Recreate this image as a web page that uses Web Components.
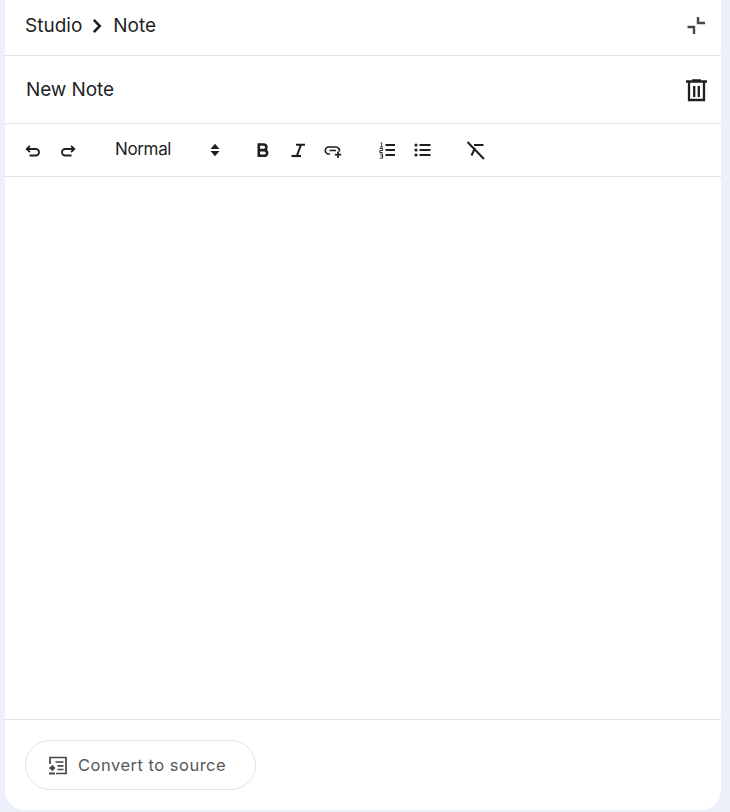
<!DOCTYPE html>
<html lang="en">
<head>
<meta charset="utf-8">
<title>Note</title>
<style>
  html, body { margin: 0; height: 100%; background: #edf0fb; }
  body { font-family: Inter, "Liberation Sans", sans-serif; color: #1f1f1f; overflow: hidden; }
</style>
</head>
<body>

<note-panel>
  <note-header slot="header">
    <span slot="root">Studio</span>
    <span slot="leaf">Note</span>
  </note-header>
  <note-title slot="title">New Note</note-title>
  <note-toolbar slot="toolbar"></note-toolbar>
  <convert-button slot="footer">Convert to source</convert-button>
</note-panel>

<script>
/* panel: white card with rows for header, title, toolbar, editor, footer */
class NotePanel extends HTMLElement {
  constructor() {
    super();
    this.attachShadow({ mode: 'open' }).innerHTML = `
      <style>
        :host { display: flex; flex-direction: column; width: 716px; height: 810px; margin-left: 5px;
                background: #fff; border-radius: 0 0 20px 20px; overflow: hidden; }
        .editor { flex: 1; }
        footer { box-sizing: border-box; height: 91px; border-top: 1px solid #e1e3e8; padding: 20px 0 0 20px; }
      </style>
      <slot name="header"></slot>
      <slot name="title"></slot>
      <slot name="toolbar"></slot>
      <div class="editor"></div>
      <footer><slot name="footer"></slot></footer>
    `;
  }
}

class NoteHeader extends HTMLElement {
  constructor() {
    super();
    this.attachShadow({ mode: 'open' }).innerHTML = `
      <style>
        :host { display: flex; align-items: center; height: 51px; padding: 0 15px 4px 20px;
                border-bottom: 1px solid #e1e3e8; font-size: 19px; color: #1f1f1f; }
        .crumbs { display: flex; align-items: center; flex: 1; }
        svg { display: block; }
        .chev { margin: 0 6px 0 5px; }
      </style>
      <div class="crumbs">
        <slot name="root"></slot>
        <svg class="chev" width="20" height="20" viewBox="0 0 20 20"><path d="M6.800 3.800 12.800 10l-6 6.200" fill="none" stroke="#1f1f1f" stroke-width="2.600"/></svg>
        <slot name="leaf"></slot>
      </div>
      <svg width="20" height="20" viewBox="0 0 20 20"><path d="M12 1v6h7M1.500 11h6.500v7" fill="none" stroke="#444746" stroke-width="2.400"/></svg>
    `;
  }
}

class NoteTitle extends HTMLElement {
  constructor() {
    super();
    this.attachShadow({ mode: 'open' }).innerHTML = `
      <style>
        :host { display: flex; align-items: center; height: 67px; border-bottom: 1px solid #e1e3e8;
                padding: 0 13px 0 21px; font-size: 19px; letter-spacing: -0.1px; color: #1f1f1f; }
        .text { flex: 1; }
        svg { display: block; }
      </style>
      <div class="text"><slot></slot></div>
      <svg width="24" height="24" viewBox="0 0 24 24" fill="none" stroke="#1f1f1f" stroke-width="2.300">
        <path d="M2 3.500h21M8 2.500h9M5 3.500V22h15V3.500M10.200 8v11M14.800 8v11"/>
      </svg>
    `;
  }
}

/* one icon slot of the toolbar */
class ToolIcon extends HTMLElement {
  constructor() {
    super();
    this.attachShadow({ mode: 'open' }).innerHTML = `
      <style>
        :host { display: flex; width: 20px; height: 20px; flex: none; }
        svg { width: 20px; height: 20px; display: block; }
      </style>
      <svg viewBox="0 0 20 20" fill="none" stroke="#1f1f1f" stroke-width="1.800">${ToolIcon.paths[this.getAttribute('name')]}</svg>
    `;
  }
}
ToolIcon.paths = {
  undo: '<path d="M6.500 15.500h6.300a3.200 3.200 0 0 0 0-6.500H3.800"/><path d="M6.900 5.800 3.700 9l3.200 3.200"/>',
  redo: '<path d="M13.500 15.500H7.200a3.200 3.200 0 0 1 0-6.500h9"/><path d="M13.100 5.800 16.300 9l-3.200 3.200"/>',
  sort: '<path d="M10 3.800 14.500 9h-9zM10 16.200 5.500 11h9z" fill="#1f1f1f" stroke="none"/>',
  bold: '<path d="M5.800 4.500h4.800a2.800 2.800 0 0 1 0 5.600H5.800zM5.800 10.100h5.500a2.800 2.800 0 0 1 0 5.700H5.800z" stroke-width="2.600"/>',
  italic: '<path d="M8 4.700h9M13 4.700 9 15.500" stroke-width="2"/><path d="M3.500 16h9.500" stroke-width="2.200"/>',
  link: '<path d="M7 14H5.800a3.500 3.500 0 0 1 0-7H13a3.500 3.500 0 0 1 3.300 4.500M6.500 10.500h6.500M15 11.500v6.500M11.800 14.700h6.400" stroke-width="1.700"/>',
  ol: '<path d="M7.500 5h9.500M7.500 10h9.500M7.500 15h9.500" stroke-width="1.800"/><path d="M2.500 2.800h1.200v4M2 7h2.800M1.800 8.500h2.800v2h-2.800v2h3M1.800 14h2.800v4.200h-2.800M2.500 16h2" stroke-width=".9"/>',
  ul: '<path d="M5.500 5h11M5.500 10h11M5.500 15h11" stroke-width="1.800"/><circle cx="2" cy="5" r="1.600" fill="#1f1f1f" stroke="none"/><circle cx="2" cy="10" r="1.600" fill="#1f1f1f" stroke="none"/><circle cx="2" cy="15" r="1.600" fill="#1f1f1f" stroke="none"/>',
  clear: '<path d="M1.500 2 18 19" stroke-width="2"/><path d="M8 5h9.500M9 8 5.500 15.500" stroke-width="2"/>'
};
customElements.define('tool-icon', ToolIcon);

class NoteToolbar extends HTMLElement {
  constructor() {
    super();
    this.attachShadow({ mode: 'open' }).innerHTML = `
      <style>
        :host { display: flex; align-items: center; height: 52px; border-bottom: 1px solid #dde3ea;
                padding-left: 18px; color: #1f1f1f; }
        .group { display: flex; gap: 15px; }
        .style { display: flex; align-items: center; width: 110px; margin: -1px 28px 0 37px;
                 font-size: 17px; letter-spacing: -0.35px; }
        .style span { flex: 1; margin-top: -2px; }
        .lists { margin-left: 35px; gap: 16px; }
        .clear { margin-left: 32px; }
      </style>
      <div class="group"><tool-icon name="undo"></tool-icon><tool-icon name="redo"></tool-icon></div>
      <div class="style"><span>Normal</span><tool-icon name="sort"></tool-icon></div>
      <div class="group"><tool-icon name="bold"></tool-icon><tool-icon name="italic"></tool-icon><tool-icon name="link"></tool-icon></div>
      <div class="group lists"><tool-icon name="ol"></tool-icon><tool-icon name="ul"></tool-icon></div>
      <div class="group clear"><tool-icon name="clear"></tool-icon></div>
    `;
  }
}

class ConvertButton extends HTMLElement {
  constructor() {
    super();
    this.attachShadow({ mode: 'open' }).innerHTML = `
      <style>
        :host { display: inline-flex; align-items: center; gap: 10px; box-sizing: border-box; width: 231px; height: 50px;
                border: 1px solid #dfe2ec; border-radius: 25px; padding-left: 21px;
                font-size: 16.500px; font-weight: 400; letter-spacing: .5px; color: #54585c; }
        svg { display: block; }
      </style>
      <svg width="21" height="21" viewBox="0 0 21 21" fill="none" stroke="#444746" stroke-width="1.700">
        <path d="M3 9V2.500h16v16H9"/>
        <path d="M8.500 7h8M10.500 10.800h6M10.500 14.500h6"/>
        <path d="M6.500 10.500 3.300 13l3.200 2.500M3.300 13H8M2 18.500h6" stroke-width="1.900"/>
      </svg>
      <slot></slot>
    `;
  }
}

customElements.define('note-panel', NotePanel);
customElements.define('note-header', NoteHeader);
customElements.define('note-title', NoteTitle);
customElements.define('note-toolbar', NoteToolbar);
customElements.define('convert-button', ConvertButton);
</script>
</body>
</html>
